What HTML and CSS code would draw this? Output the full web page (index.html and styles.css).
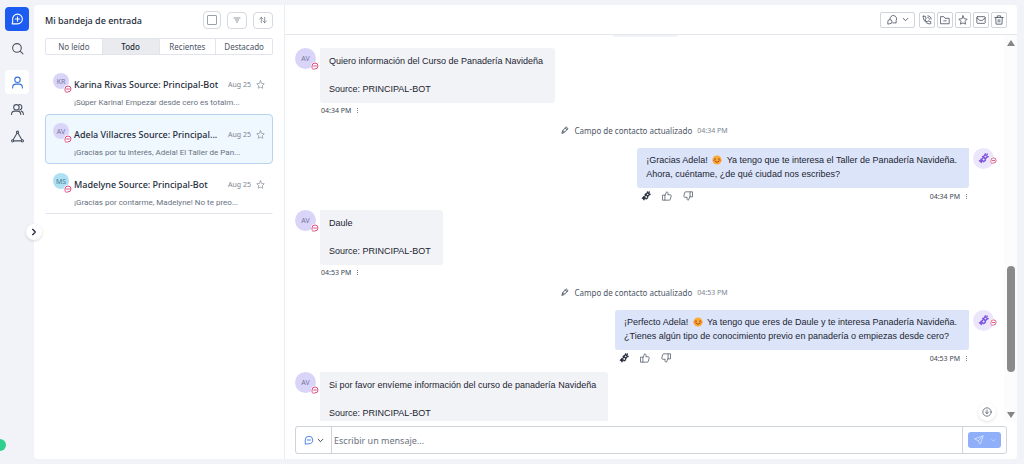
FILE: index.html
```html
<!DOCTYPE html>
<html lang="es">
<head>
    <meta charset="UTF-8">
    <meta name="viewport" content="width=device-width, initial-scale=1.0">
    <title>Mi bandeja de entrada</title>
    <link rel="stylesheet" href="styles.css">
</head>
<body>
    <!-- Iconos compartidos -->
    <svg class="sprite" aria-hidden="true">
        <symbol id="chat" viewBox="0 0 24 24"><path d="M3 21V12a9 9 0 1 1 9 9z"/><path d="M8 12h8"/></symbol>
        <symbol id="logo" viewBox="0 0 24 24"><path d="M2 20h10a9 9 0 1 0-9-9c0 4 1 6-1 9z"/><path d="M12 7v8M8 11h8"/></symbol>
        <symbol id="search" viewBox="0 0 24 24"><circle cx="11" cy="11" r="8"/><path d="M17 17l5 5"/></symbol>
        <symbol id="user" viewBox="0 0 24 24"><circle cx="12" cy="7" r="5"/><path d="M3 22v-1a6 6 0 0 1 6-6h6a6 6 0 0 1 6 6v1"/></symbol>
        <symbol id="users" viewBox="0 0 24 24"><circle cx="10" cy="8" r="5"/><path d="M1 21c0-4 3-6 6-6h5c4 0 6 2 6 6M15 3c6-1 7 8 1 10M19 15c3 1 4 3 4 6"/></symbol>
        <symbol id="flow" viewBox="0 0 24 24"><circle cx="12" cy="4" r="2"/><circle cx="3" cy="20" r="2"/><circle cx="21" cy="20" r="2"/><path d="M11 6L4 18M13 6l7 12M5 20h14"/></symbol>
        <symbol id="filter" viewBox="0 0 24 24"><path d="M3 6h18M7 12h10M10 18h4"/></symbol>
        <symbol id="sort" viewBox="0 0 24 24"><path d="M7 20V4M2 9l5-5 5 5M17 4v16M12 15l5 5 5-5"/></symbol>
        <symbol id="star" viewBox="0 0 24 24"><path d="M12 2l3 7 7 1-5 5 1 7-6-3-6 3 1-7-5-5 7-1z"/></symbol>
        <symbol id="down" viewBox="0 0 24 24"><path d="M4 8l8 8 8-8"/></symbol>
        <symbol id="right" viewBox="0 0 24 24"><path d="M8 4l8 8-8 8"/></symbol>
        <symbol id="assign" viewBox="0 0 24 24"><path d="M7 10a8 8 0 1 1 15 3v6h-8M2 21v-5a5 5 0 1 1 5 5z"/></symbol>
        <symbol id="phone" viewBox="0 0 24 24"><path d="M3 3h5l2 6-3 2c1 3 3 5 6 6l2-3 6 2v5c-10 2-19-8-18-18zM14 6c2 0 4 2 4 4M14 2c5 0 8 4 8 8"/></symbol>
        <symbol id="folder" viewBox="0 0 24 24"><path d="M2 4h7l3 4h10v13H2zM9 14h6"/></symbol>
        <symbol id="mail" viewBox="0 0 24 24"><rect x="2" y="4" width="20" height="16" rx="2"/><path d="M2 7l7 6h6l7-6"/></symbol>
        <symbol id="trash" viewBox="0 0 24 24"><path d="M2 6h20M8 6V2h8v4M4 6l1 16h14l1-16M10 11v6M14 11v6"/></symbol>
        <symbol id="pencil" viewBox="0 0 24 24"><path d="M3 21l2-7L16 3l5 5-11 11zM13 6l5 5M6 14l4 4"/></symbol>
        <symbol id="sparkle" viewBox="0 0 24 24"><path d="M16 2l2 4 4 2-4 2-2 4-2-4-4-2 4-2zM7 13l1 3 3 1-3 1-1 3-1-3-3-1 3-1z"/><path d="M9 13l3-3M20 2v1M12 19l4-3"/></symbol>
        <symbol id="like" viewBox="0 0 24 24"><path d="M2 10h5v12H2zM7 11l4-9c3 0 4 2 3 7h6c2 0 2 2 2 3l-2 8c0 1-1 2-3 2H7"/></symbol>
        <symbol id="dislike" viewBox="0 0 24 24"><path d="M22 14h-5V2h5zM17 13l-4 9c-3 0-4-2-3-7H4c-2 0-2-2-2-3l2-8c0-1 1-2 3-2h10"/></symbol>
        <symbol id="send" viewBox="0 0 24 24"><path d="M2 9L22 2l-7 20-5-8zM10 14L22 2"/></symbol>
        <symbol id="circledown" viewBox="0 0 24 24"><circle cx="12" cy="12" r="10"/><path d="M12 7v9M8 12l4 4 4-4"/></symbol>
        <symbol id="smile" viewBox="0 0 24 24"><circle cx="12" cy="12" r="11" fill="#fbab35" stroke="none"/><path d="M5 10q2-3 4 0M15 10q2-3 4 0M7 15q5 6 10 0" stroke="#8a3d12"/><path d="M3 13h4M17 13h4" stroke="#f46b3b"/></symbol>
    </svg>

    <div class="app">
        <nav class="sidebar">
            <a href="#" class="logo" aria-label="Inicio"><svg><use href="#logo"/></svg></a>
            <a href="#" class="search" aria-label="Buscar"><svg><use href="#search"/></svg></a>
            <a href="#" class="active" aria-label="Mi bandeja"><svg><use href="#user"/></svg></a>
            <a href="#" aria-label="Equipo"><svg><use href="#users"/></svg></a>
            <a href="#" aria-label="Flujos"><svg><use href="#flow"/></svg></a>
            <span class="status"></span>
            <button type="button" class="toggle" aria-label="Expandir"><svg><use href="#right"/></svg></button>
        </nav>

        <main class="panel">
            <section class="inbox">
                <header class="inbox-header">
                    <h1>Mi bandeja de entrada</h1>
                    <label class="check"><input type="checkbox" aria-label="Seleccionar todo"></label>
                    <button type="button" aria-label="Filtrar"><svg><use href="#filter"/></svg></button>
                    <button type="button" aria-label="Ordenar"><svg><use href="#sort"/></svg></button>
                </header>

                <div class="tabs">
                    <button type="button">No leído</button>
                    <button type="button" class="selected">Todo</button>
                    <button type="button">Recientes</button>
                    <button type="button">Destacado</button>
                </div>

                <ul class="conversations">
                    <li>
                        <div class="avatar small">KR<svg class="badge"><use href="#chat"/></svg></div>
                        <h2>Karina Rivas Source: Principal-Bot</h2>
                        <time>Aug 25</time>
                        <svg class="star"><use href="#star"/></svg>
                        <p>¡Súper Karina! Empezar desde cero es totalm...</p>
                    </li>
                    <li class="current">
                        <div class="avatar small">AV<svg class="badge"><use href="#chat"/></svg></div>
                        <h2>Adela Villacres Source: Principal...</h2>
                        <time>Aug 25</time>
                        <svg class="star"><use href="#star"/></svg>
                        <p>¡Gracias por tu interés, Adela! El Taller de Pan...</p>
                    </li>
                    <li>
                        <div class="avatar small blue">MS<svg class="badge"><use href="#chat"/></svg></div>
                        <h2>Madelyne Source: Principal-Bot</h2>
                        <time>Aug 25</time>
                        <svg class="star"><use href="#star"/></svg>
                        <p>¡Gracias por contarme, Madelyne! No te preo...</p>
                    </li>
                </ul>
            </section>

            <section class="chat">
                <header class="chat-header">
                    <button type="button" class="wide" aria-label="Asignar"><svg><use href="#assign"/></svg><svg class="caret"><use href="#down"/></svg></button>
                    <button type="button" aria-label="Llamar"><svg><use href="#phone"/></svg></button>
                    <button type="button" aria-label="Archivar"><svg><use href="#folder"/></svg></button>
                    <button type="button" aria-label="Destacar"><svg><use href="#star"/></svg></button>
                    <button type="button" aria-label="Correo"><svg><use href="#mail"/></svg></button>
                    <button type="button" aria-label="Eliminar"><svg><use href="#trash"/></svg></button>
                </header>

                <div class="history">
                    <div class="messages">
                        <div class="pill"></div>

                        <article class="message">
                            <div class="avatar">AV<svg class="badge"><use href="#chat"/></svg></div>
                            <div>
                                <div class="bubble">Quiero información del Curso de Panadería Navideña<br><br>Source: PRINCIPAL-BOT</div>
                                <div class="meta"><time>04:34 PM</time><i class="dots"></i></div>
                            </div>
                        </article>

                        <p class="event"><svg><use href="#pencil"/></svg>Campo de contacto actualizado <time>04:34 PM</time></p>

                        <article class="message sent">
                            <div>
                                <div class="bubble">¡Gracias Adela! <svg class="emoji"><use href="#smile"/></svg> Ya tengo que te interesa el Taller de Panadería Navideña.<br>Ahora, cuéntame, ¿de qué ciudad nos escribes?</div>
                                <div class="meta">
                                    <button type="button" aria-label="IA"><svg class="dark"><use href="#sparkle"/></svg></button>
                                    <button type="button" aria-label="Me gusta"><svg><use href="#like"/></svg></button>
                                    <button type="button" aria-label="No me gusta"><svg><use href="#dislike"/></svg></button>
                                    <time>04:34 PM</time><i class="dots"></i>
                                </div>
                            </div>
                            <div class="avatar bot"><svg><use href="#sparkle"/></svg><svg class="badge"><use href="#chat"/></svg></div>
                        </article>

                        <article class="message">
                            <div class="avatar">AV<svg class="badge"><use href="#chat"/></svg></div>
                            <div>
                                <div class="bubble">Daule<br><br>Source: PRINCIPAL-BOT</div>
                                <div class="meta"><time>04:53 PM</time><i class="dots"></i></div>
                            </div>
                        </article>

                        <p class="event"><svg><use href="#pencil"/></svg>Campo de contacto actualizado <time>04:53 PM</time></p>

                        <article class="message sent">
                            <div>
                                <div class="bubble">¡Perfecto Adela! <svg class="emoji"><use href="#smile"/></svg> Ya tengo que eres de Daule y te interesa Panadería Navideña.<br>¿Tienes algún tipo de conocimiento previo en panadería o empiezas desde cero?</div>
                                <div class="meta">
                                    <button type="button" aria-label="IA"><svg class="dark"><use href="#sparkle"/></svg></button>
                                    <button type="button" aria-label="Me gusta"><svg><use href="#like"/></svg></button>
                                    <button type="button" aria-label="No me gusta"><svg><use href="#dislike"/></svg></button>
                                    <time>04:53 PM</time><i class="dots"></i>
                                </div>
                            </div>
                            <div class="avatar bot"><svg><use href="#sparkle"/></svg><svg class="badge"><use href="#chat"/></svg></div>
                        </article>

                        <article class="message">
                            <div class="avatar">AV<svg class="badge"><use href="#chat"/></svg></div>
                            <div>
                                <div class="bubble">Si por favor envíeme información del curso de panadería Navideña<br><br>Source: PRINCIPAL-BOT</div>
                            </div>
                        </article>
                    </div>

                    <div class="scrollbar">
                        <i class="arrow-up"></i>
                        <div class="track"><i class="thumb"></i></div>
                        <i class="arrow-down"></i>
                    </div>
                    <button type="button" class="to-bottom" aria-label="Ir al final"><svg><use href="#circledown"/></svg></button>
                </div>

                <form class="composer">
                    <button type="button" class="channel" aria-label="Canal"><svg><use href="#chat"/></svg><svg class="caret"><use href="#down"/></svg></button>
                    <input type="text" placeholder="Escribir un mensaje..." aria-label="Mensaje">
                    <div class="send-box">
                        <button type="submit" class="send" aria-label="Enviar"><svg><use href="#send"/></svg><svg class="caret"><use href="#down"/></svg></button>
                    </div>
                </form>
            </section>
        </main>
    </div>
</body>
</html>
```

FILE: styles.css
```css
* {
    box-sizing: border-box;
}

body {
    font-family: "Noto Sans", "Open Sans", sans-serif;
    margin: 0;
    background-color: #f1f3f8;
    color: #252d3b;
    font-size: 9px;
}

h1, h2, p, ul {
    margin: 0;
    padding: 0;
}

button {
    font: inherit;
    color: inherit;
    background: none;
    border: none;
    padding: 0;
    cursor: pointer;
}

svg {
    width: 10px;
    height: 10px;
    fill: none;
    stroke: currentColor;
    stroke-width: 2;
    stroke-linecap: round;
    stroke-linejoin: round;
    flex: none;
}

.sprite {
    display: none;
}

.app {
    display: flex;
    height: 100vh;
    padding: 5px 7px 5px 0;
}

/* Barra lateral */
.sidebar {
    position: relative;
    width: 34px;
    flex: none;
    display: flex;
    flex-direction: column;
    align-items: center;
    gap: 3px;
    padding-top: 2px;
}

.sidebar a {
    width: 24px;
    height: 24px;
    display: flex;
    align-items: center;
    justify-content: center;
    border-radius: 4px;
    color: #4a5361;
}

.sidebar a svg {
    width: 13px;
    height: 13px;
}

.sidebar .logo {
    background-color: #1d5cf0;
    color: #ffffff;
}

.sidebar .search {
    margin: 2px 0 7px;
}

.sidebar .active {
    background-color: #ffffff;
    color: #3470d8;
}

.status {
    position: absolute;
    left: -6px;
    bottom: 8px;
    width: 12px;
    height: 12px;
    border-radius: 50%;
    background-color: #2fcf8e;
}

.toggle {
    position: absolute;
    right: -8px;
    top: 50%;
    width: 16px;
    height: 16px;
    margin-top: -8px;
    display: flex;
    align-items: center;
    justify-content: center;
    border-radius: 50%;
    background-color: #ffffff;
    box-shadow: 0 1px 3px rgba(0, 0, 0, 0.15);
}

.toggle svg {
    width: 8px;
    height: 8px;
    stroke-width: 4;
}

.panel {
    flex: 1;
    min-width: 0;
    display: flex;
    background-color: #ffffff;
    border-radius: 4px;
}

/* Lista de conversaciones */
.inbox {
    width: 251px;
    flex: none;
    padding: 6px 11px;
    border-right: 1px solid #e9ecf1;
}

.inbox-header {
    display: flex;
    align-items: center;
    gap: 6px;
    height: 18px;
}

.inbox-header h1 {
    flex: 1;
    font-size: 9px;
    font-weight: 500;
}

.inbox-header button, .check {
    width: 20px;
    height: 17px;
    display: flex;
    align-items: center;
    justify-content: center;
    border: 1px solid #d5d9e0;
    border-radius: 4px;
    color: #5b6472;
}

.inbox-header .check {
    width: 18px;
    height: 18px;
}

.check input {
    appearance: none;
    width: 10px;
    height: 10px;
    margin: 0;
    border: 1px solid #9aa2ae;
    border-radius: 1px;
}

.inbox-header svg {
    width: 8px;
    height: 8px;
}

.tabs {
    display: flex;
    height: 17px;
    margin: 9px 0;
    border: 1px solid #e1e4ea;
    border-radius: 2px;
}

.tabs button {
    flex: 1;
    font-size: 8px;
    color: #4d5665;
    border-right: 1px solid #e1e4ea;
}

.tabs button:last-child {
    border-right: none;
}

.tabs .selected {
    background-color: #e9ebef;
    color: #252d3b;
    font-weight: 500;
}

.conversations {
    list-style: none;
}

.conversations li {
    display: grid;
    grid-template-columns: 16px 1fr auto 9px;
    align-items: center;
    column-gap: 5px;
    height: 50px;
    padding: 8px 7px 3px;
    border: 1px solid transparent;
}

.conversations li:last-child {
    border-bottom-color: #e1e4ea;
}

.conversations .current {
    background-color: #eff7ff;
    border-color: #b9d3ee;
    border-radius: 4px;
}

.conversations h2 {
    font-size: 9px;
    font-weight: 500;
    white-space: nowrap;
}

.conversations time {
    font-size: 7px;
    color: #7c8491;
}

.conversations p {
    grid-column: 2 / 5;
    font-family: Roboto, sans-serif;
    font-size: 8px;
    color: #697280;
    white-space: nowrap;
}

.star {
    width: 9px;
    height: 9px;
    color: #8d95a1;
}

.avatar {
    position: relative;
    width: 21px;
    height: 21px;
    flex: none;
    display: flex;
    align-items: center;
    justify-content: center;
    border-radius: 50%;
    background-color: #d9d5f9;
    color: #77739b;
    font-size: 7px;
}

.avatar.small {
    align-self: start;
    width: 16px;
    height: 16px;
}

.avatar.blue {
    background-color: #aee0f3;
    color: #4b7f95;
}

.avatar.bot {
    background-color: #ece6fd;
    color: #7d55e0;
}

.bot svg {
    width: 11px;
    height: 11px;
    stroke-width: 3;
}

.avatar .badge {
    position: absolute;
    right: -3px;
    bottom: -1px;
    width: 8px;
    height: 8px;
    border-radius: 50%;
    background-color: #ffffff;
    color: #d8487f;
    stroke-width: 3;
}

.avatar.small .badge {
    right: -3px;
    bottom: -4px;
}

.avatar.bot .badge {
    width: 7px;
    height: 7px;
    bottom: 5px;
}

/* Chat */
.chat {
    flex: 1;
    min-width: 0;
    display: flex;
    flex-direction: column;
}

.chat-header {
    height: 30px;
    flex: none;
    display: flex;
    align-items: center;
    justify-content: flex-end;
    gap: 2px;
    padding-right: 10px;
    border-bottom: 1px solid #e3e7eb;
}

.chat-header button {
    width: 16px;
    height: 16px;
    display: flex;
    align-items: center;
    justify-content: center;
    gap: 5px;
    border: 1px solid #d0d5dc;
    border-radius: 2px;
    color: #4d5665;
}

.chat-header .wide {
    width: 35px;
    margin-right: 2px;
}

.caret {
    width: 7px;
    height: 7px;
    stroke-width: 3;
}

.history {
    position: relative;
    flex: 1;
    min-height: 0;
    display: flex;
}

.messages {
    flex: 1;
    overflow: hidden;
    display: flex;
    flex-direction: column;
    gap: 6px;
    padding: 0 10px;
}

.messages > * {
    flex: none;
}

.pill {
    align-self: center;
    width: 66px;
    height: 18px;
    margin: -16px 0 5px;
    border-radius: 3px;
    background-color: #f1f3f8;
}

.message {
    display: flex;
    align-items: flex-start;
    gap: 4px;
}

.sent {
    justify-content: flex-end;
}

.bubble {
    padding: 6px 12px 7px 9px;
    border-radius: 0 3px 3px 3px;
    background-color: #f2f3f7;
    color: #1c2431;
    font-family: "Liberation Sans", Arial, sans-serif;
    font-size: 9px;
    line-height: 14px;
}

.sent .bubble {
    padding: 5px 12px 7px 9px;
    border-radius: 3px 0 3px 3px;
    background-color: #dbe4f9;
}

.emoji {
    margin: 0 2px;
    vertical-align: -2px;
}

.meta {
    display: flex;
    align-items: center;
    height: 15px;
    padding: 0 2px 0 1px;
    font-size: 7px;
    color: #3d4654;
}

.sent .meta {
    height: 16px;
    gap: 11px;
    padding-left: 4px;
}

.sent time {
    margin-left: auto;
}

.sent .dots {
    margin-left: -5px;
}

.meta button {
    display: flex;
    color: #5b6472;
}

.dark {
    color: #252d3b;
    stroke-width: 3;
}

.dots {
    width: 1px;
    height: 5px;
    margin-left: 6px;
    border-left: 1px dotted #7c8491;
}

.event {
    display: flex;
    align-items: center;
    justify-content: center;
    gap: 5px;
    height: 12px;
    margin-bottom: 6px;
    font-size: 8px;
    color: #4d5665;
}

.event svg {
    width: 8px;
    height: 8px;
    stroke-width: 3;
}

.event time {
    font-size: 7px;
    color: #7c8491;
}

.scrollbar {
    width: 13px;
    display: flex;
    flex-direction: column;
    align-items: center;
    gap: 5px;
    padding: 5px 0 3px;
    background-color: #fcfcfd;
}

.arrow-up, .arrow-down {
    border: 4px solid transparent;
}

.arrow-up {
    border-top: none;
    border-bottom: 6px solid #858585;
}

.arrow-down {
    border-bottom: none;
    border-top: 6px solid #858585;
}

.track {
    flex: 1;
    display: flex;
    align-items: flex-end;
    padding-bottom: 35px;
}

.thumb {
    width: 8px;
    height: 33%;
    border-radius: 4px;
    background-color: #8a8a8a;
}

.to-bottom {
    position: absolute;
    right: 21px;
    bottom: 0;
    width: 18px;
    height: 18px;
    display: flex;
    align-items: center;
    justify-content: center;
    border-radius: 50%;
    background-color: #ffffff;
    box-shadow: 0 1px 3px rgba(0, 0, 0, 0.12);
    color: #5b6472;
}

.composer {
    display: flex;
    height: 28px;
    flex: none;
    margin: 5px 10px;
    border: 1px solid #cfd3da;
    border-radius: 3px;
}

.channel {
    width: 36px;
    display: flex;
    align-items: center;
    justify-content: center;
    gap: 3px;
    border-right: 1px solid #cfd3da;
}

.channel svg:first-child {
    color: #2f6fe0;
}

.composer input {
    flex: 1;
    min-width: 0;
    border: none;
    outline: none;
    padding: 0 2px;
    font: inherit;
    background: none;
}

.composer input::placeholder {
    color: #6b7380;
}

.send-box {
    display: flex;
    align-items: center;
    padding: 0 5px;
    border-left: 1px solid #cfd3da;
}

.send {
    width: 33px;
    height: 16px;
    display: flex;
    align-items: center;
    justify-content: center;
    gap: 7px;
    border-radius: 3px;
    background-color: #8fb0f8;
    color: #d5e2ff;
}

.send .caret {
    width: 5px;
    height: 5px;
}
```
